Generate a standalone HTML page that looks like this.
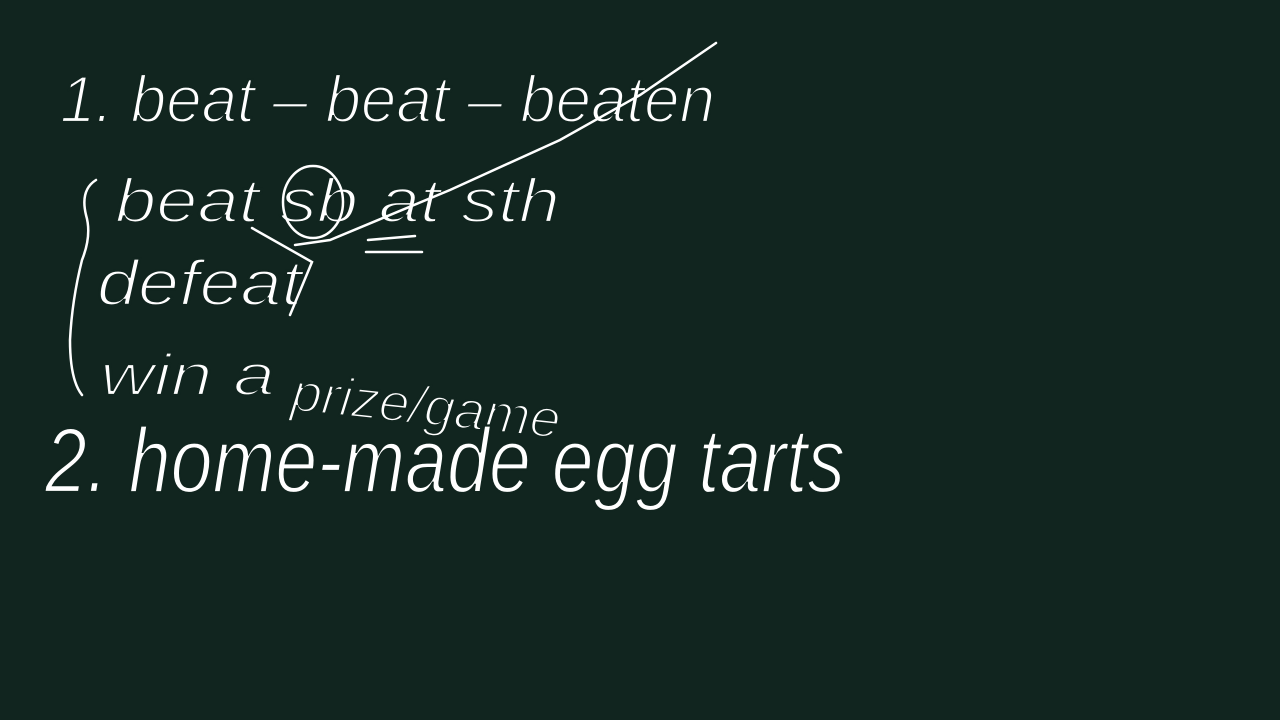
<!DOCTYPE html>
<html><head><meta charset="utf-8"><style>
html,body{margin:0;padding:0;background:#11251f;width:1280px;height:720px;overflow:hidden}
svg{display:block}
text{fill:#fff;font-family:"Liberation Sans",sans-serif;font-style:italic;stroke:#11251f;stroke-width:2.2}
</style></head><body>
<svg width="1280" height="720" viewBox="0 0 1280 720">
<text x="60" y="122" font-size="66" textLength="655" lengthAdjust="spacingAndGlyphs">1. beat – beat – beaten</text>
<text x="115" y="222" font-size="62" textLength="445" lengthAdjust="spacingAndGlyphs">beat sb at sth</text>
<text x="97" y="305" font-size="64" textLength="205" lengthAdjust="spacingAndGlyphs">defeat</text>
<text x="100" y="395" font-size="58" textLength="175" lengthAdjust="spacingAndGlyphs">win a</text>
<text x="290" y="410" font-size="54" textLength="270" lengthAdjust="spacingAndGlyphs" transform="rotate(6 290 410)">prize/game</text>
<text x="45" y="492" font-size="92" textLength="800" lengthAdjust="spacingAndGlyphs">2. home-made egg tarts</text>
<g fill="none" stroke="#fff" stroke-width="2.5" stroke-linecap="round">
<path d="M716 43 L640 95 L560 140 L450 190 L330 240 L295 245"/>
<ellipse cx="313" cy="202" rx="30" ry="36"/>
<path d="M368 240 L415 236 M366 252 L422 252"/>
<path d="M252 228 L312 262 L290 315"/>
<path d="M96 180 Q80 190 86 215 Q92 235 82 260 Q72 300 70 340 Q70 380 82 395"/>
</g>
</svg>
</body></html>
